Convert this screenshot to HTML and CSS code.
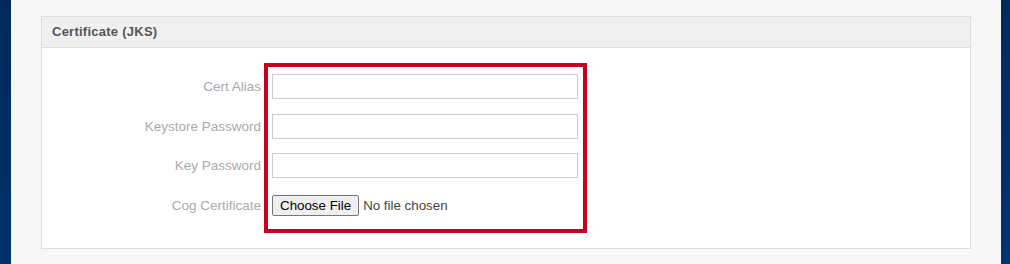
FILE: index.html
```html
<!DOCTYPE html>
<html>
<head>
<meta charset="utf-8">
<link rel="stylesheet" href="styles.css">
</head>
<body>
<div class="page">
  <div class="side side-left"></div>
  <main class="main">
    <section class="panel">
      <div class="panel-heading">Certificate (JKS)</div>
      <div class="panel-body">
        <div class="labels">
          <label class="label">Cert Alias</label>
          <label class="label">Keystore Password</label>
          <label class="label">Key Password</label>
          <label class="label">Cog Certificate</label>
        </div>
        <div class="fields">
          <div class="field"><input class="text-input" type="text"></div>
          <div class="field"><input class="text-input" type="password"></div>
          <div class="field"><input class="text-input" type="password"></div>
          <div class="field"><input class="file-input" type="file"></div>
        </div>
      </div>
    </section>
  </main>
  <div class="side side-right"></div>
</div>
</body>
</html>
```

FILE: styles.css
```css
html, body {
  margin: 0;
  padding: 0;
}
body {
  font-family: "Liberation Sans", Arial, sans-serif;
  background: #f7f7f7;
}
.page {
  display: flex;
  height: 264px;
  overflow: hidden;
}
.side {
  flex: none;
}
.side-left {
  width: 11px;
  background: linear-gradient(#002a5c, #00306a);
}
.side-right {
  width: 9px;
  background: linear-gradient(#002a5c, #003473);
}
.main {
  flex: 1;
  padding: 16px 30px 0 30px;
  background: #f7f7f7;
}
.panel {
  border: 1px solid #dddddd;
  background: #ffffff;
}
.panel-heading {
  height: 30px;
  line-height: 30px;
  padding: 0 10px;
  background: #f0f0f0;
  border-bottom: 1px solid #dddddd;
  font-size: 13px;
  font-weight: bold;
  color: #555555;
  letter-spacing: 0.25px;
}
.panel-body {
  display: flex;
  height: 200px;
  box-sizing: border-box;
  padding: 15px 0;
}
.labels {
  width: 222px;
  box-sizing: border-box;
  padding: 11px 3px 0 0;
  display: flex;
  flex-direction: column;
  gap: 14.5px;
}
.label {
  height: 25px;
  display: flex;
  align-items: center;
  justify-content: flex-end;
  font-size: 13.5px;
  color: #aaaaaa;
}
.fields {
  border: 4px solid #c8001f;
  padding: 7px 5px 0 4px;
  display: flex;
  flex-direction: column;
  gap: 14.5px;
}
.field {
  height: 25px;
  display: flex;
  align-items: center;
}
.text-input {
  width: 306px;
  height: 25px;
  box-sizing: border-box;
  border: 1px solid #cccccc;
  background: #ffffff;
  margin: 0;
  padding: 2px 6px;
  font-family: "Liberation Sans", Arial, sans-serif;
  font-size: 13px;
  outline: none;
}
.file-input {
  margin: 0;
  font-family: "Liberation Sans", Arial, sans-serif;
  font-size: 13.33px;
  color: #444444;
}
.file-input::file-selector-button {
  font-family: "Liberation Sans", Arial, sans-serif;
  font-size: 13.33px;
  color: #000000;
  background: #efefef;
  border: 1px solid #767676;
  border-radius: 2px;
  padding: 1px 7px;
  height: 21px;
  margin: 0 4px 0 0;
}
```
